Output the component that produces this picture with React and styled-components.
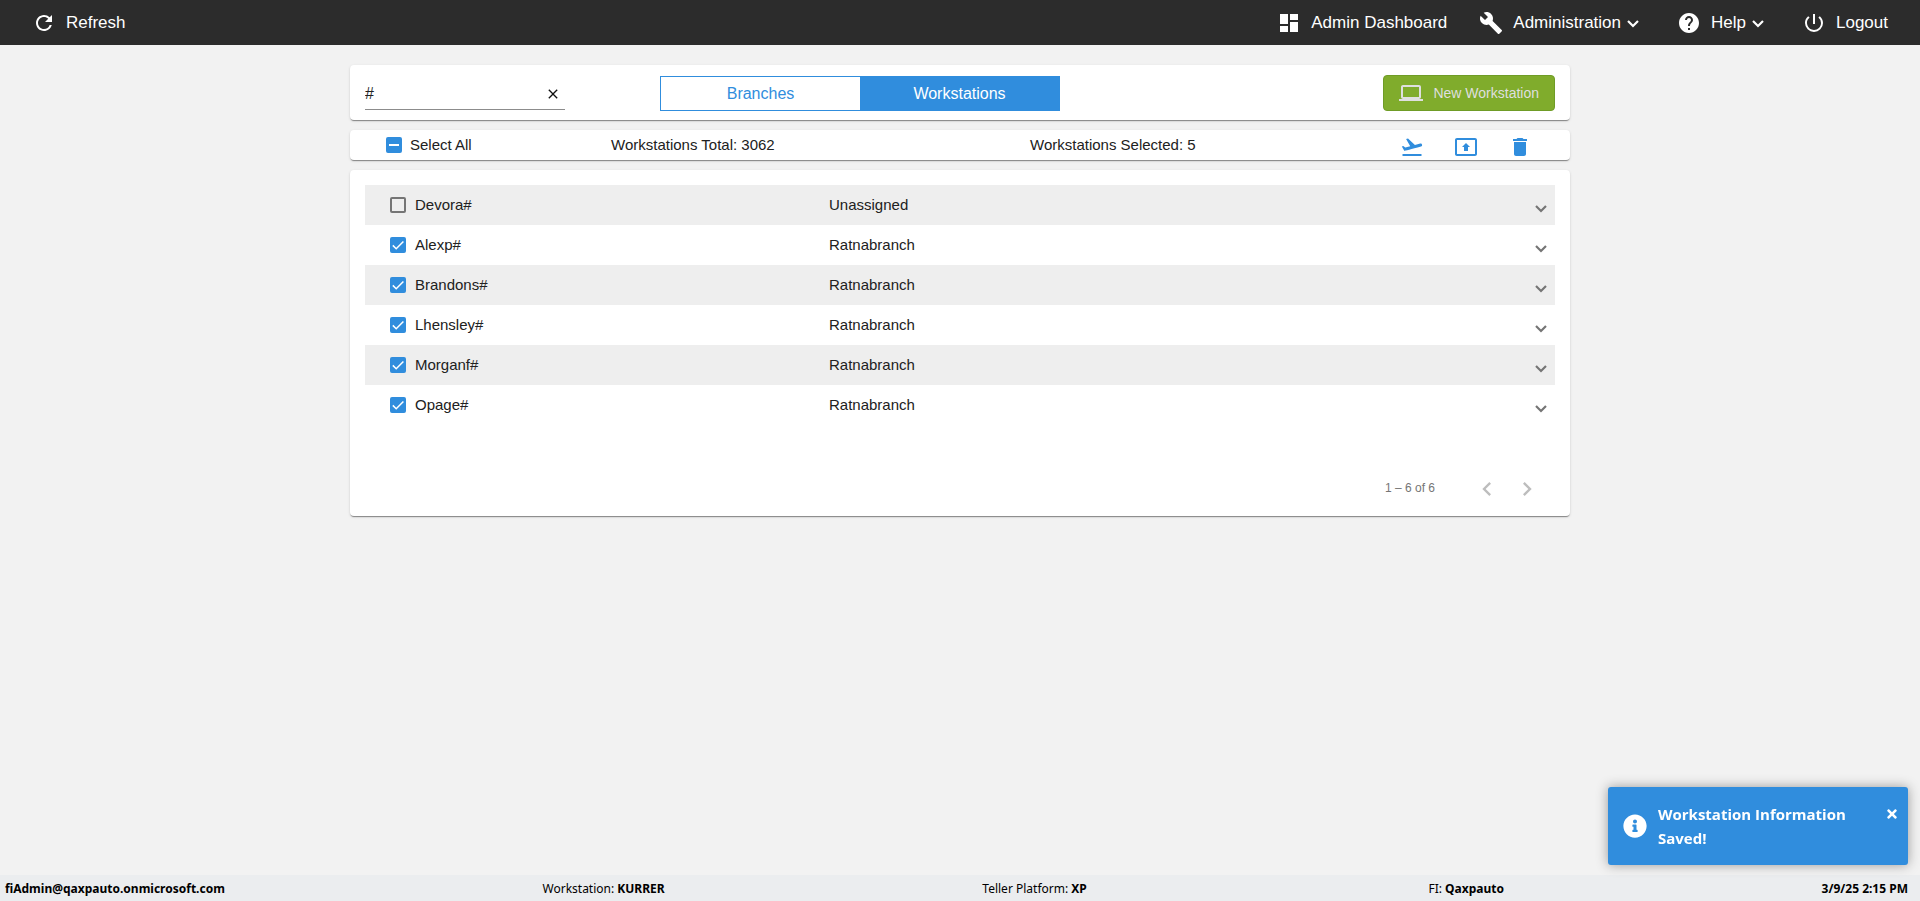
import React, { useState } from 'react';
import styled, { createGlobalStyle, css } from 'styled-components';
import {
    MdRefresh,
    MdDashboard,
    MdBuild,
    MdHelp,
    MdPowerSettingsNew,
    MdLaptop,
    MdFlightTakeoff,
    MdPresentToAll,
    MdDelete,
    MdClose,
    MdChevronLeft,
    MdChevronRight,
} from 'react-icons/md';
import { FaInfoCircle, FaTimes } from 'react-icons/fa';

const blue = '#308ddd';

const GlobalStyle = createGlobalStyle`
    *{
        box-sizing:border-box;
    }
    body{
        margin:0;
        background:#f2f2f2;
        color:#212121;
        font-family:"Liberation Sans", Arial, sans-serif;
        font-size:15px;
    }
    button, input{
        font-family:inherit;
        color:inherit;
    }
    button{
        padding:0;
        border:0;
        background:none;
        cursor:pointer;
    }
    svg{
        display:block;
        flex:none;
    }
`

const Page = styled.div`
    min-height:100vh;
    display:flex;
    flex-direction:column;
`

const Header = styled.header`
    height:45px;
    padding:0 16px;
    display:flex;
    align-items:center;
    justify-content:space-between;
    background:#2c2c2c;
    color:#fff;
`

const Nav = styled.nav`
    display:flex;
`

const NavButton = styled.button`
    display:flex;
    align-items:center;
    padding:0 16px;
    font-size:17px;
    line-height:24px;

    span{
        margin-left:10px;
    }
`

const Main = styled.main`
    flex:1;
    width:100%;
    max-width:1220px;
    margin:0 auto;
    padding-top:20px;
    display:flex;
    flex-direction:column;
    gap:10px;
`

const Card = styled.section`
    background:#fff;
    border-radius:4px;
    box-shadow:0 2px 1px -1px rgba(0,0,0,.3), 0 1px 1px 0 rgba(0,0,0,.14), 0 1px 3px 0 rgba(0,0,0,.12);
`

const FilterBar = styled(Card)`
    height:55px;
    padding:0 15px;
    display:grid;
    grid-template-columns:295px 400px 1fr;
    align-items:center;
`

const Search = styled.div`
    width:200px;
    height:34px;
    padding-top:4px;
    display:flex;
    align-items:center;
    border-bottom:1px solid #8c8c8c;

    input{
        flex:1;
        min-width:0;
        padding:0;
        border:0;
        outline:0;
        background:none;
        font-size:16px;
    }
    button{
        padding:4px;
        color:#111;
    }
`

const Tabs = styled.div`
    display:flex;
    height:35px;
    margin-top:2px;
    border:1px solid ${blue};
`

const Tab = styled.button`
    flex:1;
    font-size:16px;
    color:${({ $active }) => ($active ? '#fff' : blue)};
    background:${({ $active }) => ($active ? blue : '#fff')};
`

const NewButton = styled.button`
    justify-self:end;
    height:36px;
    padding:0 15px;
    display:flex;
    align-items:center;
    gap:10px;
    border:1px solid #6f9c26;
    border-radius:4px;
    background:#80ac2c;
    color:#dfdfdf;
    font-size:14px;
`

const SelectionBar = styled(Card)`
    height:30px;
    padding:0 38px 0 36px;
    display:grid;
    grid-template-columns:225px 419px 1fr auto;
    align-items:center;
`

const Text = styled.span`
    padding-bottom:2px;
`

const Actions = styled.div`
    display:flex;
    gap:30px;
    padding-top:4px;
    color:${blue};
`

const CheckLabel = styled.label`
    display:flex;
    align-items:center;
    gap:${({ $gap }) => $gap}px;
`

const CheckMark = styled.span`
    position:relative;
    width:16px;
    height:16px;

    input{
        appearance:none;
        display:block;
        width:16px;
        height:16px;
        margin:0;
        border:2px solid #757575;
        border-radius:2px;
        ${({ $on }) => $on && css`
            border-color:${blue};
            background:${blue};
        `}
    }
    svg{
        position:absolute;
        inset:0;
        pointer-events:none;
    }
`

const ListCard = styled(Card)`
    padding:15px 15px 7px;
`

const Rows = styled.ul`
    margin:0;
    padding:0;
    list-style:none;
`

const Row = styled.li`
    height:40px;
    padding:0 7px 0 25px;
    display:grid;
    grid-template-columns:439px 1fr auto;
    align-items:center;

    &:nth-child(odd){
        background:#eee;
    }
    button{
        padding-top:6px;
        color:#757575;
    }
`

const Paginator = styled.div`
    margin-top:44px;
    padding-right:8px;
    display:flex;
    align-items:center;
    justify-content:flex-end;
    font-size:12px;
    color:#757575;

    p{
        margin:0 32px 2px 0;
    }
    button{
        width:40px;
        height:40px;
        display:grid;
        place-items:center;
        color:#bdbdbd;
    }
`

const Footer = styled.footer`
    height:26px;
    padding:0 12px 0 5px;
    display:flex;
    align-items:center;
    justify-content:space-between;
    background:#ebedef;
    color:#000;
    font-family:"Noto Sans", sans-serif;
    font-size:12px;
`

const Institution = styled.span`
    padding-left:24px;
`

const Toast = styled.div`
    position:fixed;
    right:12px;
    bottom:36px;
    width:300px;
    padding:15px 9px 15px 15px;
    display:flex;
    align-items:center;
    border-radius:3px;
    background:${blue};
    box-shadow:0 0 12px #999;
    color:#fff;
    font-family:"Open Sans", sans-serif;
    font-size:15px;
    font-weight:700;
    line-height:24px;

    p{
        flex:1;
        margin:0 0 0 11px;
    }
    button{
        align-self:flex-start;
        padding-top:5px;
    }
`

const workstations = [
    { name: 'Devora#', branch: 'Unassigned', selected: false },
    { name: 'Alexp#', branch: 'Ratnabranch', selected: true },
    { name: 'Brandons#', branch: 'Ratnabranch', selected: true },
    { name: 'Lhensley#', branch: 'Ratnabranch', selected: true },
    { name: 'Morganf#', branch: 'Ratnabranch', selected: true },
    { name: 'Opage#', branch: 'Ratnabranch', selected: true },
];

// the arrow is always 12px wide, size only changes the space around it
function Caret({ size = 14 }) {
    const mid = size / 2;
    return (
        <svg width={size} height={size} viewBox={`0 0 ${size} ${size}`} fill="none" stroke="currentColor" strokeWidth="2.2">
            <path d={`M${mid - 5} ${mid - 2} L${mid} ${mid + 3} L${mid + 5} ${mid - 2}`} />
        </svg>
    )
}

function Checkbox({ label, checked, mixed, gap = 9, onChange }) {
    return (
        <CheckLabel $gap={gap}>
            <CheckMark $on={checked || mixed}>
                <input
                    type="checkbox"
                    checked={checked}
                    ref={el => { if (el) el.indeterminate = !!mixed; }}
                    onChange={onChange}
                />
                {(checked || mixed) && (
                    <svg width="16" height="16" viewBox="0 0 16 16" fill="none" stroke="#fff">
                        {mixed
                            ? <path d="M3 8h10" strokeWidth="2" />
                            : <path d="M2.8 8.4 6.2 11.8 13.4 4.4" strokeWidth="1.5" />}
                    </svg>
                )}
            </CheckMark>
            <Text>{label}</Text>
        </CheckLabel>
    )
}

function App() {
    const [rows, setRows] = useState(workstations);
    const [search, setSearch] = useState('#');
    const [tab, setTab] = useState('Workstations');
    const [toast, setToast] = useState(true);

    const count = rows.filter(row => row.selected).length;
    const all = count === rows.length;

    const toggle = name => setRows(rows.map(row => (
        row.name === name ? { ...row, selected: !row.selected } : row
    )));
    const toggleAll = () => setRows(rows.map(row => ({ ...row, selected: !all })));

    return (
        <Page>
            <GlobalStyle />
            <Header>
                <NavButton><MdRefresh size={24} /><span>Refresh</span></NavButton>
                <Nav>
                    <NavButton><MdDashboard size={24} /><span>Admin Dashboard</span></NavButton>
                    <NavButton><MdBuild size={24} /><span>Administration</span><Caret size={24} /></NavButton>
                    <NavButton><MdHelp size={24} /><span>Help</span><Caret size={24} /></NavButton>
                    <NavButton><MdPowerSettingsNew size={24} /><span>Logout</span></NavButton>
                </Nav>
            </Header>
            <Main>
                <FilterBar>
                    <Search>
                        <input aria-label="Search" value={search} onChange={e => setSearch(e.target.value)} />
                        <button aria-label="Clear" onClick={() => setSearch('')}><MdClose size={16} /></button>
                    </Search>
                    <Tabs>
                        {['Branches', 'Workstations'].map(name => (
                            <Tab key={name} $active={tab === name} onClick={() => setTab(name)}>{name}</Tab>
                        ))}
                    </Tabs>
                    <NewButton><MdLaptop size={24} />New Workstation</NewButton>
                </FilterBar>
                <SelectionBar>
                    <Checkbox label="Select All" checked={all} mixed={count > 0 && !all} gap={8} onChange={toggleAll} />
                    <Text>Workstations Total: 3062</Text>
                    <Text>Workstations Selected: {count}</Text>
                    <Actions>
                        <button aria-label="Deploy"><MdFlightTakeoff size={24} /></button>
                        <button aria-label="Upload"><MdPresentToAll size={24} /></button>
                        <button aria-label="Delete"><MdDelete size={24} /></button>
                    </Actions>
                </SelectionBar>
                <ListCard>
                    <Rows>
                        {rows.map(row => (
                            <Row key={row.name}>
                                <Checkbox label={row.name} checked={row.selected} onChange={() => toggle(row.name)} />
                                <Text>{row.branch}</Text>
                                <button aria-label={`Expand ${row.name}`}><Caret /></button>
                            </Row>
                        ))}
                    </Rows>
                    <Paginator>
                        <p>1 – 6 of 6</p>
                        <button aria-label="Previous page"><MdChevronLeft size={28} /></button>
                        <button aria-label="Next page"><MdChevronRight size={28} /></button>
                    </Paginator>
                </ListCard>
            </Main>
            <Footer>
                <b>fiAdmin@qaxpauto.onmicrosoft.com</b>
                <span>Workstation: <b>KURRER</b></span>
                <span>Teller Platform: <b>XP</b></span>
                <Institution>FI: <b>Qaxpauto</b></Institution>
                <b>3/9/25 2:15 PM</b>
            </Footer>
            {toast && (
                <Toast role="status">
                    <FaInfoCircle size={24} />
                    <p>Workstation Information Saved!</p>
                    <button aria-label="Close" onClick={() => setToast(false)}><FaTimes size={14} /></button>
                </Toast>
            )}
        </Page>
    )
}

export default App
